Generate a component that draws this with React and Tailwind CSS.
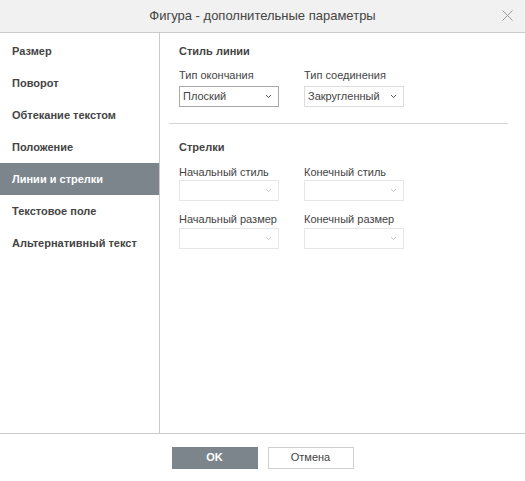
import React from "react";

const font = { fontFamily: '"Liberation Sans", Arial, sans-serif' };

function Chevron({ disabled }) {
  return (
    <svg width="7" height="5" viewBox="0 0 7 5" className="shrink-0">
      <path
        d="M1 1 L3.5 3.5 L6 1"
        fill="none"
        stroke={disabled ? "#c8c8c8" : "#555"}
        strokeWidth="1"
      />
    </svg>
  );
}

function Combo({ value, disabled, className = "" }) {
  return (
    <div
      className={`flex items-center justify-between w-[100px] border pl-[3px] pr-[6px] text-[11px] ${
        disabled ? "border-[#e6e6e6] text-[#bbb]" : "border-[#cfcfcf] text-[#444]"
      } ${className}`}
    >
      <span>{value}</span>
      <Chevron disabled={disabled} />
    </div>
  );
}

function Field({ label, value, disabled, boxClass, gap }) {
  return (
    <div className="w-[100px]">
      <div className={`h-[13px] leading-[13px] text-[11px] ${disabled ? "text-[#444]" : "text-[#444]"}`}>
        {label}
      </div>
      <Combo value={value} disabled={disabled} className={`${boxClass} ${gap}`} />
    </div>
  );
}

const tabs = [
  "Размер",
  "Поворот",
  "Обтекание текстом",
  "Положение",
  "Линии и стрелки",
  "Текстовое поле",
  "Альтернативный текст",
];

export default function App() {
  return (
    <div style={font} className="w-[525px] h-[481px] bg-white flex flex-col text-[#444]">
      <div className="h-[33px] shrink-0 bg-[#f1f1f1] border-b border-[#cbcbcb] flex items-center justify-center relative">
        <span className="text-[13px]">Фигура - дополнительные параметры</span>
        <svg
          width="11"
          height="11"
          viewBox="0 0 11 11"
          className="absolute right-[12px] top-[10px]"
        >
          <path d="M0.5 0.5 L10.5 10.5 M10.5 0.5 L0.5 10.5" stroke="#999" strokeWidth="1" />
        </svg>
      </div>

      <div className="flex flex-1 min-h-0">
        <div className="w-[160px] shrink-0 border-r border-[#cbcbcb] pt-[2px]">
          {tabs.map((t) => (
            <div
              key={t}
              className={`h-[32px] flex items-center pl-[12px] text-[11px] font-bold ${
                t === "Линии и стрелки" ? "bg-[#7d858c] text-white" : "text-[#444]"
              }`}
            >
              {t}
            </div>
          ))}
        </div>

        <div className="flex-1 pl-[9px] pr-[17px]">
          <div className="pl-[10px] pt-[12px]">
            <div className="h-[13px] leading-[13px] text-[11px] font-bold">Стиль линии</div>
            <div className="flex gap-[25px] mt-[11px]">
              <Field label="Тип окончания" value="Плоский" boxClass="h-[21px] !border-[#a9a9a9]" gap="mt-[4px]" />
              <Field label="Тип соединения" value="Закругленный" boxClass="h-[21px] !border-[#dcdcdc]" gap="mt-[4px]" />
            </div>
          </div>
          <div className="border-t border-[#d4d4d4] mt-[16px]" />
          <div className="pl-[10px] pt-[17px]">
            <div className="h-[13px] leading-[13px] text-[11px] font-bold">Стрелки</div>
            <div className="flex gap-[25px] mt-[12px]">
              <Field label="Начальный стиль" value="" disabled boxClass="h-[21px]" gap="mt-[1px]" />
              <Field label="Конечный стиль" value="" disabled boxClass="h-[21px]" gap="mt-[1px]" />
            </div>
            <div className="flex gap-[25px] mt-[12px]">
              <Field label="Начальный размер" value="" disabled boxClass="h-[21px]" gap="mt-[2px]" />
              <Field label="Конечный размер" value="" disabled boxClass="h-[21px]" gap="mt-[2px]" />
            </div>
          </div>
        </div>
      </div>

      <div className="h-[48px] shrink-0 border-t border-[#cbcbcb] flex items-center justify-center gap-[10px]">
        <button className="w-[86px] h-[22px] bg-[#7d858c] text-white text-[11px] font-bold">OK</button>
        <button className="w-[86px] h-[22px] border border-[#cfcfcf] bg-white text-[#444] text-[11px]">
          Отмена
        </button>
      </div>
    </div>
  );
}
